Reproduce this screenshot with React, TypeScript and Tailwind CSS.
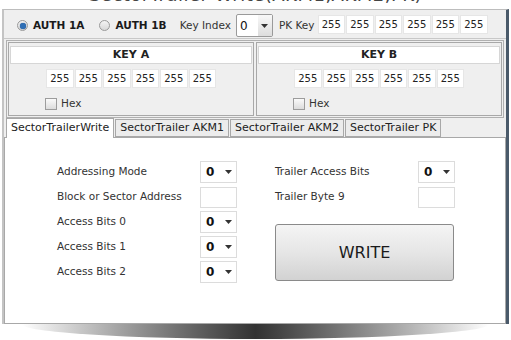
const font = { fontFamily: '"DejaVu Sans", Verdana, sans-serif' }

function ByteBox({ value }: { value: string }) {
  return (
    <div className="w-[27.5px] h-[19px] bg-white border border-[#e6e6e6] flex items-center justify-center text-[10px] text-[#222]">
      {value}
    </div>
  )
}

function Radio({ checked }: { checked?: boolean }) {
  return (
    <div className="w-[11px] h-[11px] rounded-full border border-[#9a9a9a] bg-gradient-to-b from-[#f4f4f4] to-[#d8d8d8] flex items-center justify-center">
      {checked && <div className="w-[6px] h-[6px] rounded-full bg-[#2f6fb5] shadow-[0_0_1px_#0a3d80]" />}
    </div>
  )
}

function Select({ value }: { value: string }) {
  return (
    <div className="w-[37px] h-[22px] bg-white border border-[#dcdcdc] flex items-center justify-between pl-[5px] pr-[4px]">
      <span className="text-[12px] font-bold text-[#111]">{value}</span>
      <svg width="7" height="4" viewBox="0 0 7 4"><path d="M0 0h7L3.5 4z" fill="#333" /></svg>
    </div>
  )
}

function KeyPanel({ title }: { title: string }) {
  return (
    <div className="flex-1 border border-[#a8a8a8] bg-[#efefef] flex flex-col">
      <div className="mx-[1px] mt-[3px] h-[18px] bg-white border border-[#d6d6d6] flex items-center justify-center text-[11px] font-bold text-[#222]">
        {title}
      </div>
      <div className="flex justify-center gap-[1px] mt-[5px]">
        {[0, 1, 2, 3, 4, 5].map((i) => (
          <ByteBox key={i} value="255" />
        ))}
      </div>
      <div className="flex items-center gap-[4px] mt-[8px] ml-[36px]">
        <div className="w-[12px] h-[12px] border border-[#9c9c9c] bg-gradient-to-b from-[#fafafa] to-[#dcdcdc]" />
        <span className="text-[10.5px] text-[#333]">Hex</span>
      </div>
    </div>
  )
}

function FormRow({ label, children }: { label: string; children: React.ReactNode }) {
  return (
    <div className="flex items-center h-[22px]">
      <span className="flex-1 text-[10.5px] text-[#333]">{label}</span>
      {children}
    </div>
  )
}

export default function App() {
  const tabs = ["SectorTrailerWrite", "SectorTrailer AKM1", "SectorTrailer AKM2", "SectorTrailer PK"]
  return (
    <div className="w-[511px] h-[340px] bg-white overflow-hidden relative" style={font}>
      <div className="h-[9px] overflow-hidden flex items-end justify-center">
        <span className="text-[18px] leading-[18px] text-[#444] mb-[5px] tracking-[0.5px]">SectorTrailer Write(AKM1,AKM2,PK)</span>
      </div>

      <div className="ml-[2px] w-[507px] border-l-[2px] border-l-[#c4c4c4] border-r-[3px] border-r-[#4a5a6a] border-t border-t-[#bdbdbd] bg-[#efefef] h-[315px] flex flex-col">
        <div className="h-[29px] flex items-center pl-[13px] pt-[3px] border-b border-[#c8c8c8]">
          <Radio checked />
          <span className="ml-[5px] text-[10.5px] font-bold text-[#1a1a1a]">AUTH 1A</span>
          <div className="ml-[15px]"><Radio /></div>
          <span className="ml-[5px] text-[10.5px] font-bold text-[#1a1a1a]">AUTH 1B</span>
          <span className="ml-[13px] text-[10.5px] text-[#333]">Key Index</span>
          <div className="ml-[5px] w-[37px] h-[23px] bg-white border border-[#9a9a9a] rounded-[2px] flex items-center justify-between pl-[3px]">
            <span className="text-[12px] text-[#111]">0</span>
            <div className="w-[14px] h-full bg-gradient-to-b from-[#f8f8f8] to-[#dddddd] flex items-center justify-center">
              <svg width="7" height="4" viewBox="0 0 7 4"><path d="M0 0h7L3.5 4z" fill="#333" /></svg>
            </div>
          </div>
          <span className="ml-[6px] text-[10.5px] text-[#333]">PK Key</span>
          <div className="ml-[3px] mb-[2px] flex gap-[1px]">
            {[0, 1, 2, 3, 4, 5].map((i) => (
              <ByteBox key={i} value="255" />
            ))}
          </div>
        </div>

        <div className="mx-[2px] mt-[1px] h-[78px] border border-[#b0b0b0] flex gap-[2px] p-[1px]">
          <KeyPanel title="KEY A" />
          <KeyPanel title="KEY B" />
        </div>

        <div className="flex items-end gap-[1px] h-[19px] pl-[2px]">
          {tabs.map((t, i) => (
            <div
              key={t}
              className={
                i === 0
                  ? "h-[20px] px-[4px] bg-white border border-b-0 border-[#a8a8a8] text-[11px] text-[#222] flex items-center relative z-10 -mb-[1px]"
                  : "h-[18px] px-[4px] bg-[#ececec] border border-[#a8a8a8] text-[11px] text-[#222] flex items-center"
              }
            >
              {t}
            </div>
          ))}
        </div>

        <div className="flex-1 bg-white border border-[#a8a8a8] flex pt-[23px]">
          <div className="w-[180px] ml-[52px] flex flex-col gap-[3px]">
            <FormRow label="Addressing Mode"><Select value="0" /></FormRow>
            <FormRow label="Block or Sector Address"><div className="w-[37px] h-[21px] border border-[#dcdcdc]" /></FormRow>
            <FormRow label="Access Bits 0"><Select value="0" /></FormRow>
            <FormRow label="Access Bits 1"><Select value="0" /></FormRow>
            <FormRow label="Access Bits 2"><Select value="0" /></FormRow>
          </div>
          <div className="w-[180px] ml-[38px] flex flex-col gap-[3px]">
            <FormRow label="Trailer Access Bits"><Select value="0" /></FormRow>
            <FormRow label="Trailer Byte 9"><div className="w-[37px] h-[21px] border border-[#dcdcdc]" /></FormRow>
            <button className="mt-[13px] h-[57px] w-[179px] rounded-[3px] border border-[#8a8a8a] bg-gradient-to-b from-[#f4f4f4] via-[#e6e6e6] to-[#d2d2d2] text-[16px] text-[#1a1a1a]" style={font}>
              WRITE
            </button>
          </div>
        </div>
      </div>

      <div className="mx-[22px] h-[15px] bg-gradient-to-r from-white via-[#333] to-white" style={{ clipPath: "ellipse(50% 100% at 50% 0%)" }} />
    </div>
  )
}
